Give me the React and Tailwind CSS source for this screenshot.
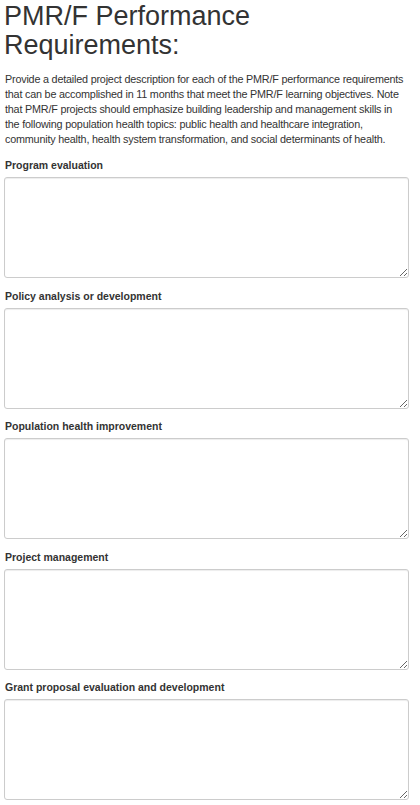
import React from 'react';

const fields = [
    'Program evaluation',
    'Policy analysis or development',
    'Population health improvement',
    'Project management',
    'Grant proposal evaluation and development',
];

const App = () => {
    return (
        <div className="min-h-screen bg-white pl-1 pr-[11px] text-[#333] font-['Liberation_Sans',Arial,sans-serif]">
            <h2 className="pt-[2px] text-[27px] leading-[29px] font-normal">
                PMR/F Performance Requirements:
            </h2>
            <p className="mt-[12px] pl-px w-[405px] text-[10.8px] leading-[15px] tracking-[-0.2px]">
                Provide a detailed project description for each of the PMR/F performance requirements
                that can be accomplished in 11 months that meet the PMR/F learning objectives. Note
                that PMR/F projects should emphasize building leadership and management skills in
                the following population health topics: public health and healthcare integration,
                community health, health system transformation, and social determinants of health.
            </p>

            <div className="mt-[11px]">
                {fields.map((label) => (
                    <div key={label} className="mb-[10.5px]">
                        <label className="block pl-px mb-[4px] text-[10.5px] leading-[15px] font-bold">
                            {label}
                        </label>
                        <textarea
                            className="block w-full h-[101px] bg-white border border-[#ccc] rounded-[3px] shadow-[inset_0_1px_1px_rgba(0,0,0,0.075)] resize-y"
                        />
                    </div>
                ))}
            </div>
        </div>
    );
};

export default App;
